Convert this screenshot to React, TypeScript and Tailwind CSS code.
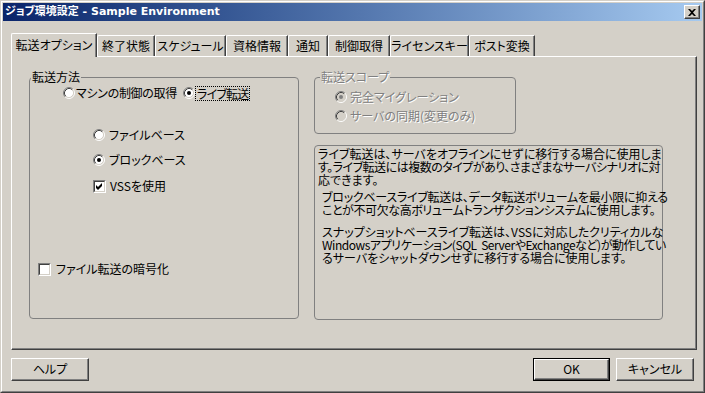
import React from 'react'

const jp = "font-['Noto_Sans_CJK_JP',sans-serif] [font-feature-settings:'palt']"

const Radio = ({ checked, disabled }: { checked?: boolean; disabled?: boolean }) => (
  <svg width="12" height="12" viewBox="0 0 12 12" className="shrink-0">
    <circle cx="6" cy="6" r="4.5" fill={disabled ? '#D4D0C8' : '#fff'} />
    <path d="M2.11 9.89 A5.5 5.5 0 0 1 9.89 2.11" stroke="#808080" fill="none" />
    <path d="M9.89 2.11 A5.5 5.5 0 0 1 2.11 9.89" stroke="#fff" fill="none" />
    <path d="M2.82 9.18 A4.5 4.5 0 0 1 9.18 2.82" stroke="#404040" fill="none" />
    <path d="M9.18 2.82 A4.5 4.5 0 0 1 2.82 9.18" stroke="#D4D0C8" fill="none" />
    {checked && <circle cx="6" cy="6" r="2" fill={disabled ? '#808080' : '#000'} />}
  </svg>
)

const Check = ({ checked }: { checked?: boolean }) => (
  <div className="w-[13px] h-[13px] shrink-0 border border-t-[#808080] border-l-[#808080] border-r-white border-b-white">
    <div className="w-full h-full bg-white border border-t-[#404040] border-l-[#404040] border-r-[#D4D0C8] border-b-[#D4D0C8] flex items-center justify-center">
      {checked && (
        <svg width="7" height="7" viewBox="0 0 7 7">
          <path d="M0 2 L2 4 L6 0 L6 3 L2 7 L0 5 Z" fill="#000" />
        </svg>
      )}
    </div>
  </div>
)

const tabs = [
  { label: '終了状態', w: 'w-[58px]' },
  { label: 'スケジュール', w: 'w-[71px]' },
  { label: '資格情報', w: 'w-[62px]' },
  { label: '通知', w: 'w-[40px]' },
  { label: '制御取得', w: 'w-[62px]' },
  { label: 'ライセンスキー', w: 'w-[79px]' },
  { label: 'ポスト変換', w: 'w-[66px]' },
]

const Button = ({ children, def, w }: { children: React.ReactNode; def?: boolean; w: string }) => (
  <div className={`${w} h-[23px] ${def ? 'border border-black' : ''}`}>
    <div className="w-full h-full border border-t-white border-l-white border-r-[#404040] border-b-[#404040] shadow-[inset_-1px_-1px_0_#808080] flex items-center justify-center pb-px">
      {children}
    </div>
  </div>
)

export default function App() {
  return (
    <div className={`w-[705px] h-[393px] bg-[#D4D0C8] border border-t-[#D4D0C8] border-l-[#D4D0C8] border-r-[#404040] border-b-[#404040] text-[12px] leading-[14px] text-black ${jp}`}>
      <div className="h-full border border-t-white border-l-white border-r-[#808080] border-b-[#808080] p-px flex flex-col">
        {/* title bar */}
        <div className="h-[18px] flex items-center bg-linear-to-r from-[#0A246A] to-[#A6CAF0] pl-[2px] pr-[2px]">
          <div className="text-white font-bold text-[11px] font-['DejaVu_Sans','Noto_Sans_CJK_JP',sans-serif] whitespace-nowrap">
            ジョブ環境設定 - Sample Environment
          </div>
          <div className="ml-auto w-[16px] h-[14px] bg-[#D4D0C8] border border-t-white border-l-white border-r-[#404040] border-b-[#404040] shadow-[inset_-1px_-1px_0_#808080] flex items-center justify-center">
            <svg width="8" height="7" viewBox="0 0 8 7">
              <path d="M0 0 H2 L4 2 L6 0 H8 L5 3.5 L8 7 H6 L4 5 L2 7 H0 L3 3.5 Z" fill="#000" />
            </svg>
          </div>
        </div>

        <div className="pl-[8px] pr-[5px] pt-[12px] flex flex-col">
          {/* tabs */}
          <div className="h-[23px] flex items-end">
            <div className="relative z-10 w-[86px] h-[24px] -mb-px bg-[#D4D0C8] border-l border-t border-r border-t-white border-l-white border-r-[#404040] shadow-[inset_-1px_0_0_#808080] rounded-tl-[2px] flex items-start justify-center pt-[4px] whitespace-nowrap">
              転送オプション
            </div>
            {tabs.map((t) => (
              <div
                key={t.label}
                className={`${t.w} h-[21px] border-l border-t border-r border-t-white border-l-white border-r-[#404040] shadow-[inset_-1px_0_0_#808080] rounded-tl-[2px] flex items-start justify-center pt-[3px] whitespace-nowrap`}
              >
                {t.label}
              </div>
            ))}
          </div>

          {/* panel */}
          <div className="h-[294px] border border-t-white border-l-white border-r-[#404040] border-b-[#404040] shadow-[inset_-1px_-1px_0_#808080] flex items-start pl-[17px] pt-[13px]">
            <fieldset className="w-[270px] h-[249px] border border-[#808080] rounded-[4px]">
              <legend className="ml-[1px] px-[1px]">転送方法</legend>
              <div className="flex items-center h-[14px] mt-[2px] pl-[33px]">
                <div className="flex items-center w-[120px] gap-px">
                  <Radio />
                  <span className="whitespace-nowrap tracking-[-0.3px]">マシンの制御の取得</span>
                </div>
                <Radio checked />
                <span className="border border-dotted border-black px-px leading-[13px] whitespace-nowrap tracking-[-0.8px]">ライブ転送</span>
              </div>
              <div className="flex items-center h-[14px] mt-[28px] pl-[63px] gap-[4px]">
                <Radio />
                <span>ファイルベース</span>
              </div>
              <div className="flex items-center h-[14px] mt-[11px] pl-[63px] gap-[4px]">
                <Radio checked />
                <span>ブロックベース</span>
              </div>
              <div className="flex items-center h-[14px] mt-[12px] pl-[63px] gap-[4px]">
                <Check checked />
                <span>VSSを使用</span>
              </div>
              <div className="flex items-center h-[14px] mt-[69px] pl-[8px] gap-[5px]">
                <Check />
                <span>ファイル転送の暗号化</span>
              </div>
            </fieldset>

            <div className="ml-[15px] w-[349px] flex flex-col">
              <fieldset className="w-[202px] border border-[#808080] rounded-[4px] pb-[10px] text-[#808080] [text-shadow:1px_1px_0_#fff]">
                <legend className="ml-[5px] px-[1px]">転送スコープ</legend>
                <div className="flex items-center h-[14px] mt-[6px] pl-[20px] gap-[3px]">
                  <Radio checked disabled />
                  <span>完全マイグレーション</span>
                </div>
                <div className="flex items-center h-[14px] mt-[5px] pl-[20px] gap-[3px]">
                  <Radio disabled />
                  <span>サーバの同期(変更のみ)</span>
                </div>
              </fieldset>

              <div className="mt-[11px] w-[349px] h-[175px] border border-[#808080] rounded-[4px] pt-[1px] pl-[3px] leading-[13px] whitespace-nowrap">
                <div>ライブ転送は、サーバをオフラインにせずに移行する場合に使用しま</div>
                <div className="tracking-[-0.5px]">す。ライブ転送には複数のタイプがあり、さまざまなサーバシナリオに対</div>
                <div>応できます。</div>
                <div className="pl-[4px] mt-[4px]">
                  <div className="tracking-[-0.25px]">ブロックベースライブ転送は、データ転送ボリュームを最小限に抑える</div>
                  <div className="tracking-[-0.4px]">ことが不可欠な高ボリュームトランザクションシステムに使用します。</div>
                  <div className="mt-[9px]">スナップショットベースライブ転送は、VSSに対応したクリティカルな</div>
                  <div className="tracking-[-0.45px]">Windowsアプリケーション(SQL&nbsp;&nbsp;ServerやExchangeなど)が動作してい</div>
                  <div>るサーバをシャットダウンせずに移行する場合に使用します。</div>
                </div>
              </div>
            </div>
          </div>

          {/* buttons */}
          <div className="mt-[8px] flex items-center pr-[3px]">
            <Button w="w-[78px]">ヘルプ</Button>
            <div className="ml-auto flex gap-[6px]">
              <Button w="w-[77px]" def>OK</Button>
              <Button w="w-[78px]">キャンセル</Button>
            </div>
          </div>
        </div>
      </div>
    </div>
  )
}
